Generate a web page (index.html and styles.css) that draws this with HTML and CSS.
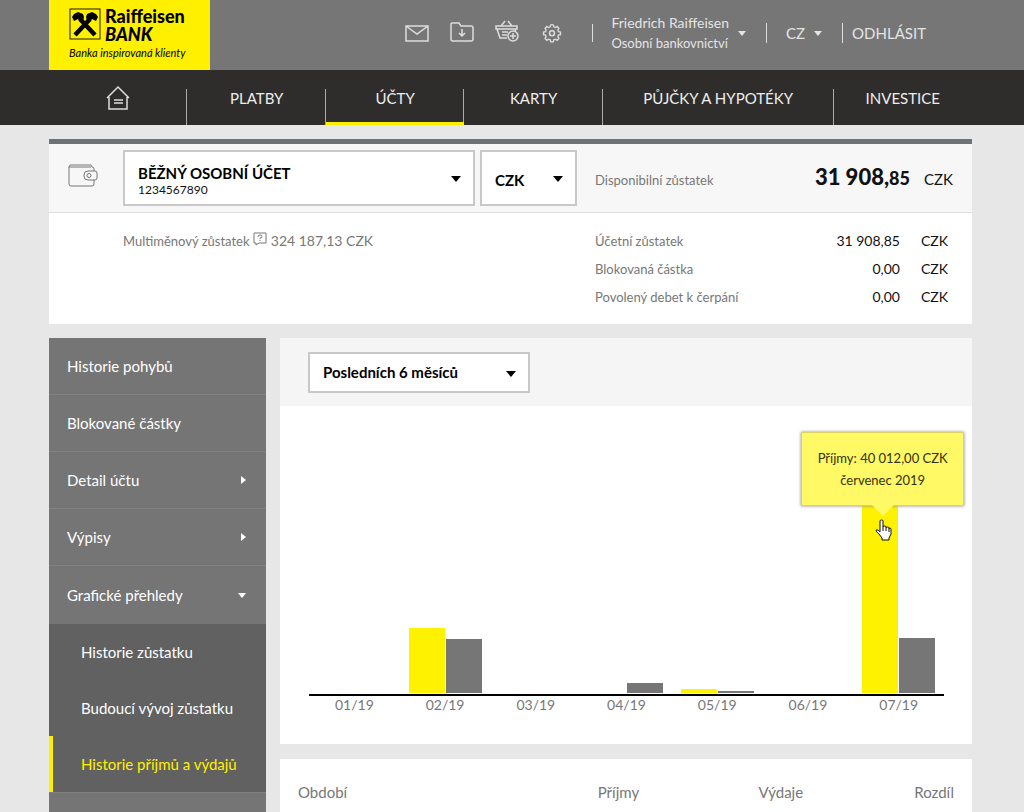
FILE: index.html
```html
<!DOCTYPE html>
<html lang="cs">
<head>
<meta charset="utf-8">
<meta name="viewport" content="width=device-width, initial-scale=1">
<title>Raiffeisenbank – Historie příjmů a výdajů</title>
<link rel="stylesheet" href="styles.css">
</head>
<body>
<header class="topbar">
  <a class="logo" href="#">
    <span class="logo-main">
      <svg class="logo-mark" viewBox="0 0 32 32" aria-hidden="true">
        <rect x="1" y="1" width="30" height="30" fill="none" stroke="#1d1a00" stroke-width="1"/>
        <path d="M6 27 21 11M26 27 11 11" fill="none" stroke="#000" stroke-width="4.500"/>
        <path d="M3 9 5 6 9 4 14 6 15 9 14 13 11 14 9 11 5 13ZM29 9 27 6 23 4 18 6 17 9 18 13 21 14 23 11 27 13Z"/>
      </svg>
      <span class="logo-name"><span>Raiffeisen</span><em>BANK</em></span>
    </span>
    <span class="logo-claim">Banka inspirovaná klienty</span>
  </a>
  <div class="tools">
    <button class="tool" aria-label="Zprávy"><svg width="26" height="24" viewBox="0 0 26 24"><path d="M2 5h22v15H2zM2 5l11 8 11-8"/></svg></button>
    <button class="tool" aria-label="Dokumenty"><svg width="26" height="24" viewBox="0 0 26 24"><path d="M3 2h7l2 3h10q2 0 2 2v11q0 2-2 2H4q-2 0-2-2V3q0-1 1-1zM13 8v7M10 12l3 3 3-3"/></svg></button>
    <button class="tool" aria-label="Košík"><svg width="26" height="24" viewBox="0 0 26 24"><path d="M13 17H6L3 8M2 5h21v3H2zM22 8l-1 2M7 5l4-5M18 5l-4-5M8 11h6M8 14h5"/><circle cx="19" cy="15" r="5"/><path d="M19 12v6M16 15h6"/></svg></button>
    <button class="tool" aria-label="Nastavení"><svg width="26" height="24" viewBox="0 0 26 24"><path d="M11.500 3h3l.5 2.200 1.700.7 1.900-1.200 2.100 2.100-1.200 1.900.7 1.700 2.200.5v3l-2.200.5-.7 1.700 1.200 1.900-2.100 2.100-1.900-1.200-1.700.7-.5 2.200h-3l-.5-2.200-1.700-.7-1.900 1.200-2.100-2.100 1.200-1.900-.7-1.700-2.200-.5v-3l2.200-.5.7-1.700-1.200-1.900 2.100-2.100 1.900 1.200 1.700-.7z" transform="translate(1.300 1.200) scale(.9)"/><circle cx="13" cy="12.300" r="2.500"/></svg></button>
  </div>
  <button class="user" aria-haspopup="menu"><span>Friedrich Raiffeisen<small>Osobní bankovnictví</small></span><i class="caret"></i></button>
  <button class="lang" aria-haspopup="menu">CZ<i class="caret"></i></button>
  <a class="logout" href="#">ODHLÁSIT</a>
</header>

<nav class="mainnav" aria-label="Hlavní navigace">
  <a href="#" aria-label="Domů"><svg width="24" height="26" viewBox="0 0 24 26"><path d="M1 13 12 2l11 11M3 12v12h18V12M8 15h9M8 18h9" fill="none" stroke="#ddd" stroke-width="1.500"/></svg></a>
  <a href="#">PLATBY</a>
  <a href="#" class="active" aria-current="page">ÚČTY</a>
  <a href="#">KARTY</a>
  <a href="#" class="wide">PŮJČKY A HYPOTÉKY</a>
  <a href="#">INVESTICE</a>
</nav>

<main class="page">
  <section class="account">
    <div class="account-head">
      <svg class="wallet" width="30" height="24" viewBox="0 0 30 24" aria-hidden="true"><path d="M26 7V5q0-2-2-2l-1-2H3Q1 1 1 3v17q0 2 2 2h21q2 0 2-2v-4M1 3h22M20 7h7q2 0 2 2v5q0 2-2 2h-7q-4 0-4-4v-1q0-4 4-4z"/><circle cx="21" cy="11.500" r="2"/></svg>
      <div class="select-box account-select">
        <select id="account" aria-label="Účet"><option>BĚŽNÝ OSOBNÍ ÚČET</option></select>
        <label class="account-number" for="account">1234567890</label>
      </div>
      <div class="select-box currency-select"><select aria-label="Měna"><option>CZK</option></select></div>
      <span class="available">Disponibilní zůstatek</span>
      <span class="total"><strong>31 908,<small>85</small></strong><span>CZK</span></span>
    </div>
    <div class="account-body">
      <p class="multi"><span class="muted">Multiměnový zůstatek</span>
        <svg width="14" height="14" viewBox="0 0 14 14" aria-hidden="true"><path d="M1 1h12v10H6l-3 2v-2H1zM5 5q0-2 2-2t2 1.500Q9 6 7 6v1M7 8v1"/></svg>
        324 187,13 CZK</p>
      <table class="balances">
        <tr><th scope="row">Účetní zůstatek</th><td>31 908,85</td><td>CZK</td></tr>
        <tr><th scope="row">Blokovaná částka</th><td>0,00</td><td>CZK</td></tr>
        <tr><th scope="row">Povolený debet k čerpání</th><td>0,00</td><td>CZK</td></tr>
      </table>
    </div>
  </section>

  <div class="columns">
    <nav class="sidebar" aria-label="Účty">
      <a href="#">Historie pohybů</a>
      <a href="#">Blokované částky</a>
      <a href="#">Detail účtu<i class="caret right"></i></a>
      <a href="#">Výpisy<i class="caret right"></i></a>
      <a href="#" class="open">Grafické přehledy<i class="caret"></i></a>
      <div class="submenu">
        <a href="#">Historie zůstatku</a>
        <a href="#">Budoucí vývoj zůstatku</a>
        <a href="#" class="current" aria-current="page">Historie příjmů a výdajů</a>
      </div>
    </nav>
    <div class="content">
      <section class="chart-card">
        <div class="filter">
          <div class="select-box period-select"><select aria-label="Období"><option>Posledních 6 měsíců</option></select></div>
        </div>
        <div class="chart">
          <div class="month"><div class="bars"></div><span>01/19</span></div>
          <div class="month"><div class="bars"><i class="bar income" style="height:65px"></i><i class="bar expense" style="height:54px"></i></div><span>02/19</span></div>
          <div class="month"><div class="bars"></div><span>03/19</span></div>
          <div class="month"><div class="bars"><i class="bar"></i><i class="bar expense" style="height:10px"></i></div><span>04/19</span></div>
          <div class="month"><div class="bars"><i class="bar income" style="height:4px"></i><i class="bar expense" style="height:2px"></i></div><span>05/19</span></div>
          <div class="month"><div class="bars"></div><span>06/19</span></div>
          <div class="month"><div class="bars">
            <i class="bar income" style="height:188px">
              <span class="tooltip" role="tooltip">Příjmy: 40 012,00 CZK<br>červenec 2019</span>
              <svg class="pointer" width="17" height="22" viewBox="0 0 17 22" aria-hidden="true"><path d="M5 13V2q0-1 1.500-1T8 2v6q0-1 1.500-1T11 8v1q0-1 1.500-1T14 9v1q0-1 1-1t1 1.500V15l-2 4v2H7v-2l-3-4-3-3q0-2 2-1z" fill="#fff" stroke="#111"/><path d="M8 8v4M11 9v3M14 10v3" stroke="#111"/></svg>
            </i>
            <i class="bar expense" style="height:55px"></i></div><span>07/19</span></div>
        </div>
      </section>
      <section class="table-card">
        <table class="history">
          <thead><tr><th scope="col">Období</th><th scope="col">Příjmy</th><th scope="col">Výdaje</th><th scope="col">Rozdíl</th></tr></thead>
        </table>
      </section>
    </div>
  </div>
</main>
</body>
</html>
```
FILE: styles.css
```css
* { box-sizing: border-box; }
body {
  margin: 0;
  background: #e7e7e7;
  color: #111;
  font: 14px/20px Lato, "Open Sans", sans-serif;
}
a { color: inherit; text-decoration: none; }
button { border: 0; padding: 0; background: none; color: inherit; font: inherit; cursor: pointer; }
select {
  width: 100%; height: 100%;
  border: 0; padding: 0 13px;
  appearance: none; background: none; color: #000;
  font: inherit; font-weight: 700;
}
.caret {
  display: inline-block;
  border: 4px solid transparent;
  border-top: 5px solid currentColor;
  border-bottom: 0;
}
.caret.right { border: 4px solid transparent; border-left: 5px solid currentColor; border-right: 0; }

.topbar {
  display: flex; align-items: center;
  height: 70px; padding: 0 98px 4px 49px;
  background: #767676; color: #e4e4e4;
}
.logo {
  display: flex; flex-direction: column; align-self: flex-start;
  width: 161px; height: 70px; padding: 7px 0 0 20px;
  background: #fff000; color: #000;
}
.logo-main { display: flex; gap: 4px; }
.logo-mark { width: 32px; height: 32px; margin-top: 1px; }
.logo-name { display: flex; flex-direction: column; font-size: 18px; line-height: 18px; font-weight: 900; }
.logo-claim { margin-top: 1px; font-size: 11px; line-height: 18px; font-style: italic; }
.tools { display: flex; gap: 19px; margin-left: auto; padding-right: 27px; }
.tool { display: flex; }
.tool svg { fill: none; stroke: #ddd; stroke-width: 1.5; overflow: visible; }
.user, .lang { display: flex; align-items: center; text-align: left; }
.user { gap: 9px; padding-left: 19px; background: linear-gradient(#ddd, #ddd) left center / 1px 18px no-repeat; }
.user small { display: block; font-size: 13px; }
.lang { gap: 9px; margin-left: 20px; padding: 0 20px 0 19px; font-size: 15px; border: solid #ddd; border-width: 0 1px; }
.logout { padding-left: 9px; font-size: 15px; }

.mainnav {
  display: flex;
  height: 55px; padding: 0 52px 0 49px;
  background: #2f2d2c; color: #ededed;
}
.mainnav a {
  display: flex; flex: 3 1 0; justify-content: center; align-items: center;
  padding-top: 4px;
  border-bottom: 3px solid transparent;
  background: linear-gradient(#aaa, #aaa) right bottom / 1px 36px no-repeat border-box;
  font-size: 15px;
}
.mainnav a.wide { flex-grow: 5; }
.mainnav a:last-child { background: none; }
.mainnav a.active { border-bottom-color: #fff000; }

.page { padding: 14px 52px 0 49px; }
.account { border-top: 5px solid #6f7275; background: #fff; }
.account-head {
  display: flex; align-items: center;
  padding: 6px 19px 6px 19px;
  background: #f7f7f7; border-bottom: 1px solid #dedede;
}
.wallet, .multi svg { fill: none; stroke: #777; }
.wallet { margin: 0 25px 4px 0; }
.select-box { position: relative; background: #fff; border: 2px solid #c8c8c8; }
.select-box::after {
  content: "";
  position: absolute; right: 12px; top: 50%; margin-top: -2px;
  border: 5px solid transparent; border-top: 6px solid #000; border-bottom: 0;
  pointer-events: none;
}
.account-select { flex: 0 1 352px; height: 56px; }
.account-select select { padding-bottom: 10px; font-size: 15px; }
.account-number { position: absolute; left: 13px; bottom: 5px; font-size: 12px; line-height: 18px; }
.currency-select { flex: 0 0 97px; height: 56px; margin-left: 5px; font-size: 15px; }
.currency-select select { padding-top: 3px; }
.available { margin-left: 18px; padding-top: 3px; font-size: 13px; color: #777; }
.total { display: flex; align-items: baseline; gap: 14px; margin-left: auto; font-size: 15px; }
.total strong { font-size: 22px; font-weight: 900; }
.total small { font-size: 18px; }
.account-body { display: flex; justify-content: space-between; padding: 14px 24px 13px 74px; }
.multi { margin: 0; line-height: 28px; color: #777; }
.muted { font-size: 13px; }
.balances { width: 353px; border-collapse: collapse; line-height: 28px; }
.balances th, .balances td { padding: 0; }
.balances th { text-align: left; font-size: 13px; font-weight: 400; color: #777; }
.balances td { text-align: right; }
.balances td:last-child { width: 48px; }

.columns { display: grid; grid-template-columns: 217px 1fr; gap: 14px; margin-top: 14px; }
.sidebar { background: #757575; color: #fff; font-size: 15px; }
.sidebar a {
  display: flex; align-items: center; justify-content: space-between;
  height: 57px; padding: 0 20px 0 18px;
  border-bottom: 1px solid #808080;
}
.sidebar a.open { height: 58px; border-bottom: 0; }
.submenu { background: #616161; border-bottom: 1px solid #808080; }
.sidebar .submenu a { height: 56px; border-bottom: 0; padding-left: 32px; }
.sidebar .submenu a.current { border-left: 4px solid #fff000; padding-left: 28px; color: #fff000; }

.chart-card, .table-card { background: #fff; }
.filter { padding: 14px 28px 13px; background: #f5f5f5; }
.period-select { width: 222px; height: 41px; font-size: 15px; }
.period-select select { padding-bottom: 2px; }
.chart { display: flex; padding: 98px 28px 30px 29px; }
.month { flex: 1 1 0; text-align: center; line-height: 19px; color: #777; }
.bars {
  display: flex; justify-content: center; align-items: flex-end; gap: 1px;
  height: 192px; padding-bottom: 1px;
  border-bottom: 2px solid #000;
}
.bar { position: relative; width: 36px; font-style: normal; }
.income { background: #fff200; }
.expense { background: #767676; }
.month > span { display: block; height: 18px; font-size: 14px; line-height: 18px; }
.tooltip {
  position: absolute; left: -61px; bottom: 187px;
  width: 163px; padding: 14px 0;
  background: #fff965; color: #33310f;
  border: 1px solid #d9d36a; box-shadow: 0 0 3px #888;
  font-size: 13px; line-height: 22px;
}
.tooltip::after {
  content: "";
  position: absolute; left: 50%; top: 100%; margin-left: -11px;
  border: 11px solid transparent; border-top-color: #fff965; border-bottom: 0;
}
.pointer { position: absolute; left: 13px; top: 14px; fill: none; }

.table-card { margin-top: 15px; padding: 19px 18px; }
.history { width: 100%; border-collapse: collapse; table-layout: fixed; font-size: 15px; line-height: 28px; color: #777; }
.history th { padding: 0; font-weight: 400; text-align: right; }
.history th:first-child { text-align: left; width: 26%; }
.history th:nth-child(3) { width: 25%; }
.history th:last-child { width: 23%; }
```
